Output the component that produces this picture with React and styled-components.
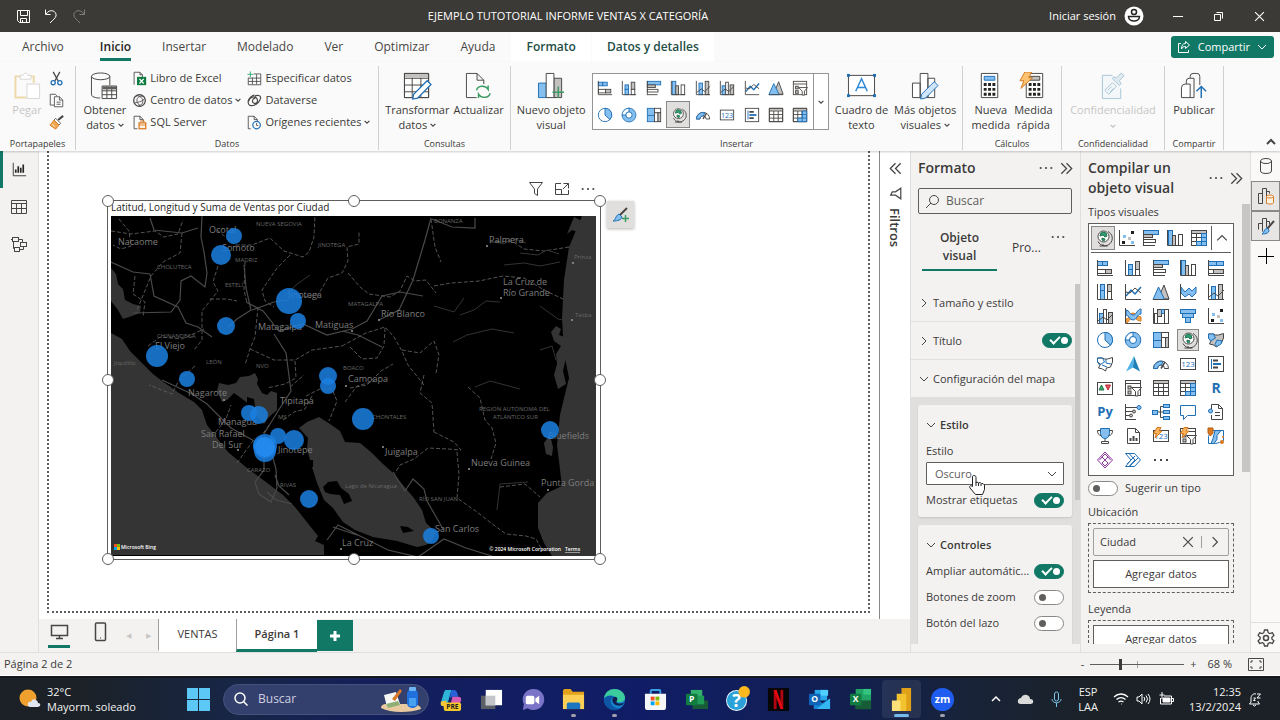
import React from 'react'
import styled, { createGlobalStyle, css } from 'styled-components'

const K = '#484644'
const B = '#84bff0'
const D = '#1f6fb5'
const G = '#c3c1bf'
const O = '#d8791f'
const green = '#117865'

/* ---------- icon drawings, 18 x 18 ---------- */

const Box = ({ x, y, w, h, f = '#fff', s = K }) => (
  <rect x={x + 0.5} y={y + 0.5} width={w} height={h} fill={f} stroke={s} />
)
const Axis = () => <path d="M1.500 1v15.500H17" />
const Bolt = () => <path d="M5 .5h4L7 4h3L3 11l1.500-4.500H1.500z" fill="#f8b25a" stroke={O} />

const tableIcon = <>
  <Box x={1} y={1} w={15} h={15} />
  <path d="M1.500 3h15" stroke={G} strokeWidth="2" />
  <path d="M1.500 4.500h15M1.500 8.500h15M1.500 12.500h15M6.500 4.500v12M11.500 4.500v12M1.500 1.500h15v15h-15z" />
</>
const slicerIcon = <>
  <Box x={1} y={1} w={15} h={15} />
  <path d="M1.500 4.500h15" />
  <rect x="4" y="7" width="3" height="3" fill={G} />
  <rect x="4" y="12" width="3" height="3" fill={G} />
  <path d="M7.500 8.500h10l-3.500 4v4.500h-2.500V12.500z" fill="#fff" />
</>
const cardIcon = <>
  <Box x={1} y={3} w={15} h={11} />
  <text x="9" y="12" textAnchor="middle" fontSize="8" fill={D} stroke="none">123</text>
</>

const glyphs = {
  stackedBar: <><Box x={1} y={2} w={5} h={4} f={B} s={D} /><Box x={6} y={2} w={5} h={4} f={B} s={D} /><Box x={1} y={10} w={8} h={4} /><Box x={9} y={10} w={6} h={4} f={G} /><Axis /></>,
  stackedCol: <><Box x={4} y={5} w={4} h={5} f={B} s={D} /><Box x={4} y={10} w={4} h={6} f={B} s={D} /><Box x={11} y={2} w={4} h={8} f={G} /><Box x={11} y={10} w={4} h={6} /><Axis /></>,
  clusteredBar: <><Box x={1} y={1} w={15} h={4} f={B} s={D} /><Box x={1} y={5} w={9} h={3} f={G} /><Box x={1} y={10} w={12} h={3} /><path d="M1.500 1v16M1.500 16.500H13" /></>,
  clusteredCol: <><Box x={2} y={1} w={4} h={15} f={B} s={D} /><Box x={6} y={6} w={3} h={10} f={G} /><Box x={12} y={5} w={4} h={11} /><Axis /></>,
  fullBar: <><Box x={1} y={2} w={8} h={4} f={B} s={D} /><Box x={9} y={2} w={7} h={4} f={B} s={D} /><Box x={1} y={10} w={5} h={4} /><Box x={6} y={10} w={10} h={4} f={G} /><Axis /></>,
  fullCol: <><Box x={4} y={1} w={4} h={6} f={B} s={D} /><Box x={4} y={7} w={4} h={9} f={B} s={D} /><Box x={11} y={1} w={4} h={7} f={G} /><Box x={11} y={8} w={4} h={8} /><Axis /></>,
  line: <><path d="M2 13l5-6 4 4 6-7" stroke={D} strokeWidth="1.500" /><path d="M2 9l4 1 5-5 6 5" /><Axis /></>,
  area: <><path d="M6 16l6-14 5 14z" fill={G} /><path d="M1 16.500L6.500 4l6 12.500z" fill={B} stroke={D} /><path d="M1 16.500h16" /></>,
  stackedArea: <><path d="M2 4l4 5 4-4 3 3 4-4v6l-4 4-3-3-4 3-4-4z" fill={B} stroke={D} /><Axis /></>,
  lineStackedCol: <><Box x={4} y={3} w={4} h={13} f={B} s={D} /><Box x={11} y={1} w={4} h={15} f={G} /><path d="M2 14l5-4 4 3 6-6" /><Axis /></>,
  lineCol: <><Box x={3} y={6} w={4} h={10} f={B} s={D} /><Box x={7} y={2} w={3} h={14} /><Box x={12} y={5} w={4} h={11} f={G} /><path d="M2 14l5-4 4 3 6-6" /><Axis /></>,
  ribbon: <><path d="M2 12c4 0 3-6 7-6s4 4 8 4v4c-5 0-4-3-8-3s-4 5-7 5z" fill="#f3a64c" stroke={O} /><path d="M2 3c4 0 3 5 7 5s4-6 8-6v5c-4 0-4 6-8 6s-4-5-7-5z" fill={B} stroke={D} /><Axis /></>,
  waterfall: <><Box x={2} y={6} w={3} h={10} /><Box x={5} y={2} w={4} h={7} f={G} /><Box x={9} y={2} w={3} h={4} f={B} s={D} /><Box x={12} y={2} w={4} h={14} /><Axis /></>,
  funnel: <><Box x={1} y={2} w={15} h={4} f={B} s={D} /><Box x={3} y={6} w={11} h={4} f={B} s={D} /><Box x={6} y={10} w={5} h={5} f={B} s={D} /></>,
  scatter: <><g stroke="none"><rect x="13" y="2" width="3" height="3" fill="#201f1e" /><rect x="4" y="12" width="3" height="3" fill="#201f1e" /><rect x="5" y="6" width="3" height="3" fill={B} /><rect x="10" y="8" width="3" height="3" fill={G} /><rect x="13" y="12" width="3" height="3" fill={B} /></g><Axis /></>,
  pie: <><circle cx="9" cy="9" r="7.500" fill="#fff" stroke={D} /><path d="M9 9V1.500A7.500 7.500 0 0 1 14.500 14.300z" fill={B} stroke={D} /></>,
  donut: <><circle cx="9" cy="9" r="5.500" stroke={B} strokeWidth="4" /><path d="M9 3.500a5.500 5.500 0 0 0-5.500 5.500" stroke="#fff" strokeWidth="3" /><circle cx="9" cy="9" r="7.800" stroke={D} /><circle cx="9" cy="9" r="3.500" stroke={D} /><path d="M9 1v4.500M1 9h4.500" stroke={D} /></>,
  treemap: <><Box x={1} y={1} w={8} h={15} f={B} s={D} /><path d="M1.500 9.500h8" stroke={D} /><Box x={9} y={1} w={7} h={5} /><Box x={9} y={6} w={4} h={10} /><Box x={13} y={6} w={3} h={10} f={G} /></>,
  globe: <><circle cx="9.500" cy="7.500" r="5.500" fill="#fff" /><path d="M9 3l3 1 1 3-2 1-2-2-3 1 1-3zM8 9l3 1-1 2-2-1z" fill="#2f9e6e" stroke="#21724f" /><path d="M14 2.500A7.500 7.500 0 1 1 4 12.500M9 15v2M5.500 17h8" /></>,
  filledMap: <><path d="M1.500 3h5l2 1h3l5-1.500V7l-2 5-4 1-1 3-3-2-4-1 2-4-3-2z" fill={G} /><path d="M1.500 3h5l2 4-5 3-2-3zM10 9l5 1-1 3-4 2.500-2-2z" fill={B} stroke={D} /></>,
  shapeMap: <><path d="M1.500 3h5l2 1h3l5-1.500V7l-2 5-4 1-1 3-3-2-4-1 2-4-3-2z" fill="#fff" /><path d="M1.500 3h5l2 4-5 3-2-3zM10 4v4l5 1M6 10l5 2" stroke={D} /></>,
  azure: <><path d="M10 1L2 16.500l7-4z" fill="#4fb3e8" stroke="none" /><path d="M10 1l6 15.500-7-4z" fill="#1d7fb8" stroke="none" /></>,
  gauge: <><path d="M1.500 13.500a7.500 7.500 0 0 1 15 0h-4a3.500 3.500 0 0 0-7 0z" fill="#fff" /><path d="M1.500 13.500a7.500 7.500 0 0 1 9.500-7L9.500 10a3.500 3.500 0 0 0-4 3.500z" fill={B} stroke={D} /><path d="M9 13.500L13 7" strokeWidth="1.500" /></>,
  card: cardIcon,
  multiRow: <><Box x={1} y={1} w={15} h={15} /><path d="M4.500 4v10" stroke={D} /><path d="M6 5.500h5M6 12.500h5" strokeWidth="2" /><path d="M6 9h8" stroke={D} strokeWidth="2" /></>,
  kpi: <><Box x={1} y={3} w={15} h={12} /><path d="M3 11l2.500-5L8 11z" fill="#3bab66" stroke="#21724f" /><path d="M9.500 6h5L12 11z" fill="#e5525b" stroke="#b52a36" /></>,
  slicer: slicerIcon,
  table: tableIcon,
  matrix: <>{tableIcon}<path d="M11.500 4.500h5v12h-10v-4h5z" fill={B} stroke={D} /><path d="M11.500 8.500h5M11.500 12.500h5M11.500 4.500v12" stroke={D} /></>,
  r: <text x="9" y="14" textAnchor="middle" fontSize="14" fontWeight="700" fill={D} stroke="none">R</text>,
  py: <text x="9" y="13" textAnchor="middle" fontSize="13" fontWeight="700" fill={D} stroke="none">Py</text>,
  influencers: <><path d="M2 4.500h11M2 8.500h7M2 12.500h4M2 16.500h10" /><path d="M1.500 1v16" /><circle cx="15" cy="4.500" r="2" fill={B} stroke={D} /><circle cx="10" cy="8.500" r="1.500" fill={G} /><circle cx="7" cy="12.500" r="1.500" fill={G} /></>,
  tree: <><path d="M5 9h6M8.500 3.500v11M8.500 3.500H11M8.500 14.500H11" /><Box x={0} y={7} w={5} h={4} f={B} s={D} /><Box x={11} y={1} w={6} h={3} f={B} s={D} /><Box x={11} y={7} w={6} h={3} f={B} s={D} /><Box x={11} y={13} w={6} h={3} f={B} s={D} /></>,
  qna: <path d="M1.500 2.500h15v10h-8l-4 4v-4h-3z" fill="#fff" stroke={D} />,
  narrative: <><path d="M4.500 6V1.500h7l4 4v11h-11V12" fill="#fff" /><path d="M11.500 1.500v4h4M8 9.500h5M8 12.500h5" /><circle cx="3.500" cy="8" r="2" fill={B} stroke={D} /></>,
  trophy: <><path d="M4.500 1.500h9v5c0 3-2 5-4.500 5s-4.500-2-4.500-5z" fill={B} stroke={D} /><path d="M4.500 3.500h-3c0 3 1 5 4 5M13.500 3.500h3c0 3-1 5-4 5M9 12v3M5.500 16.500h7v-2h-7z" /></>,
  paginated: <><path d="M3.500 1.500h8l4 4v11h-12z" fill="#fff" /><path d="M11.500 1.500v4h4" /><path d="M6.500 14v-3M9.500 14v-5M12.500 14v-3" strokeWidth="2" /></>,
  newCard: <>{cardIcon}<Bolt /></>,
  newSlicer: <>{slicerIcon}<Bolt /></>,
  arcgis: <><path d="M4 3.500h12.500v10l-4 2-4 1H1.500v-7z" fill="#fff" stroke={D} /><path d="M8 3.500h6l-4 5v4l-3 4H4l2-5z" fill={B} stroke={D} /><path d="M1 1h5v5L3.500 9 1 6z" fill={O} stroke="#b85c10" /><circle cx="15" cy="15" r="2" fill={O} stroke="none" /><circle cx="16" cy="10" r="1" fill={O} stroke="none" /></>,
  powerApps: <g stroke="#8d3a9d"><path d="M9 1l7.500 8L9 17 1.500 9z" fill="#fff" /><path d="M9 3L6 6l6 6-3 3M9 3l3 3-6 6 3 3M3.500 9L6 6M14.500 9L12 6" /></g>,
  powerAutomate: <g stroke={D}><path d="M1.500 2.500h9l6 6.500-6 6.500h-9L7 9z" fill="#fff" /><path d="M5 2.500l6 6.500-6 6.500M3 13l8-8M6 15l8-8" /></g>,
  dots: <g fill={K} stroke="none"><rect x="2" y="8" width="2" height="2" /><rect x="8" y="8" width="2" height="2" /><rect x="14" y="8" width="2" height="2" /></g>,

  excelFile: <><path d="M2.500 16.500v-15h7l3 3v3" /><path d="M9.500 1.500v3h3" /><rect x="6" y="7" width="11" height="10" fill="#107c41" stroke="none" /><path d="M9 9.500l5 5.500M14 9.500l-5 5.500" stroke="#fff" strokeWidth="1.500" /></>,
  hub: <><circle cx="9" cy="9" r="7" strokeWidth="1.500" /><path d="M3 5c4-4 10 0 10 5 0 3-2 5-5 5M15 5c-4-3-10 0-9 5 0 2 2 4 4 5M3 12c3-1 9-1 12-5" /></>,
  sqlFile: <><path d="M2.500 16.500v-15h7l4 4v3" /><path d="M9.500 1.500v4h4M2.500 16.500h4" /><rect x="8.500" y="9.500" width="8" height="7" fill="#fdf3e3" stroke={O} strokeWidth="1.500" /><path d="M8.500 12h8M10.500 9V7h4v2" stroke={O} /></>,
  enterData: <><path d="M1.500 8v8.500h15v-13H8" /><path d="M1.500 8.500h15M1.500 12.500h15M6.500 8v8M11.500 4v12" /><path d="M4 .5v7M.5 4h7" stroke="#21a366" /></>,
  dataverse: <g strokeWidth="1.400"><path d="M10 6.500a3 3 0 1 0 2.500 3.500c.5-4-2.500-6-6-5S1 9 1.500 12s3 3.500 5.500 3c5-1 8-4 9.500-9.500M16.500 5.500c-.5-3-4-3-7-2" /><path d="M2 10c1-4 3-7 7-7.500" /></g>,
  recent: <><path d="M4.500 16.500h-3v-15h7l4 4v2" /><path d="M8.500 1.500v4h4" /><circle cx="11.500" cy="12" r="4.500" fill="#fff" stroke={D} strokeWidth="1.500" /><path d="M11.500 9.500V12.500h2" /></>,
  cut: <><path d="M5 1l6 11M13 1L7 12" strokeWidth="1.500" /><circle cx="5" cy="14" r="2.500" stroke={D} strokeWidth="1.500" /><circle cx="13" cy="14" r="2.500" stroke={D} strokeWidth="1.500" /></>,
  copy: <><path d="M6 14.500H1.500v-13h6l2 2" /><path d="M6.500 4.500h6l4 4v8h-10z" fill="#fff" /><path d="M12.500 4.500v4h4M9 11h5M9 13.500h5" /></>,
  brush: <><path d="M17 1l-6 5" strokeWidth="2.500" /><path d="M8 4l6 6-2 2-6-6z" fill="#fff" /><path d="M6 6l6 6-4 5-7-5 2-2z" fill="#f0a651" stroke={O} /><path d="M4 11l3 3" stroke="#fff" /></>,
  report: <><path d="M1.500 1v15.500H17" stroke="#252423" /><path d="M4.500 13v-4M7.500 13V5M10.500 13V7M13.500 13V3" strokeWidth="2" stroke="#252423" /></>,
  model: <><Box x={2} y={2} w={6} h={4} f="#f3f2f1" /><Box x={10} y={7} w={6} h={4} f="#f3f2f1" /><Box x={4} y={12} w={5} h={4} f="#f3f2f1" /><path d="M1 4.500h1M8.500 4.500h4v3M3.500 6.500v7h1M9.500 14.500h4v-3" /></>,
  tableView: <><path d="M1.500 2.500h15v13h-15zM1.500 5.500h15M1.500 10.500h15M6.500 5.500v10M11.500 5.500v10" /></>,
  cylinder: <><ellipse cx="9" cy="4" rx="5.500" ry="2.500" /><path d="M3.500 4v10c0 3.300 11 3.300 11 0V4" /></>,
  buildPane: <><path d="M1.500 16.500v-10h4v10zM5.500 16.500v-15h4v15M9.500 6.500v-2h3v2" /><path d="M9.500 9.500c0-2 7-2 7 0v6c0 2-7 2-7 0z" fill="#fdf3e3" stroke={O} /><path d="M9.500 9.500c0 2 7 2 7 0" stroke={O} /></>,
  formatPane: <><path d="M1.500 12.500v-6h4v8M5.500 10v-8.500h4v9M9.500 4.500h3v3" /><path d="M17 4l-7 8" strokeWidth="2" /><path d="M10 11l2 2c0 3-3 4-7 4 2-1 2-5 5-6z" fill={B} stroke={D} /></>,
}

const Svg = styled.svg`
  display: block;
  flex: none;
  fill: none;
  stroke: ${p => p.$ink || K};
  font-family: 'Open Sans', sans-serif;
`
const Glyph = ({ name, size = 18 }) => (
  <Svg width={size} height={size} viewBox="0 0 18 18" overflow="visible" aria-hidden="true">{glyphs[name]}</Svg>
)

const arrows = {
  down: 'M1 3l4 4 4-4',
  up: 'M1 7l4-4 4 4',
  right: 'M3 1l4 4-4 4',
  cross: 'M1 1l8 8M9 1L1 9',
  dblRight: 'M1 1l4 4-4 4M5 1l4 4-4 4',
  dblLeft: 'M5 1L1 5l4 4M9 1L5 5l4 4',
}
const Arrow = ({ to, size = 10, color = K, weight = 1 }) => (
  <Svg width={size} height={size} viewBox="0 0 10 10" aria-hidden="true">
    <path d={arrows[to]} stroke={color} strokeWidth={weight} />
  </Svg>
)

/* large ribbon icons */
const big = {
  paste: <g stroke="#d9d6d2"><path d="M8 4.500H2.500v22H14" stroke="#eed9a8" strokeWidth="2" /><path d="M18 4.500h3.500v7" stroke="#eed9a8" strokeWidth="2" /><path d="M7.500 7.500v-4h3c0-3 5-3 5 0h3v4z" fill="#fff" /><path d="M14.500 12.500h13v15h-13z" fill="#fff" /></g>,
  getData: <><ellipse cx="11" cy="4.500" rx="9.500" ry="3.500" /><path d="M1.500 4.500v19c0 2 4 3.500 9 3.500M20.500 4.500v9" /><path d="M12.500 14.500h15v13h-15zM12.500 19.500h15M12.500 23.500h15M17.500 15v12M22.500 15v12" fill="#fff" /><path d="M13 16.500h14" stroke="#605e5c" strokeWidth="3" /></>,
  transform: <><path d="M1.500 1.500h25v25h-25z" fill="#fff" /><path d="M2 3.500h24" stroke={G} strokeWidth="4" /><path d="M1.500 6.500h25M1.500 13.500h25M1.500 20.500h25M9.500 6v21M18.500 6v21M1.500 1.500h25v25h-25z" /><path d="M25 9l4 4-14 14-5 1 1-5z" fill="#fff" stroke={D} strokeWidth="1.300" /></>,
  refresh: <><path d="M13 26.500H2.500v-25h11l7 7v4" /><path d="M13.500 1.500v7h7" /><path d="M13 19c1-5 9-6 12-1v-4M27 22c-1 5-9 6-12 1v4" stroke="#3a9b64" strokeWidth="1.500" /></>,
  newVisual: <><path d="M1.500 11.500h8v15h-8z" fill={B} stroke={D} /><path d="M17.500 6.500h8v20h-8z" fill={G} /><path d="M9.500 1.500h8v25h-8z" fill="#fff" /><path d="M22 15v12M16 21h12" stroke="#3a9b64" strokeWidth="1.500" /></>,
  textBox: <><path d="M1.500 3.500h27v21h-27z" fill="#fff" /><path d="M9 20l6-13 6 13M11 16h8" stroke="#2b88d8" strokeWidth="1.500" /><g fill={D} stroke="none"><rect x="0" y="2" width="3" height="3" /><rect x="27" y="2" width="3" height="3" /><rect x="0" y="23" width="3" height="3" /><rect x="27" y="23" width="3" height="3" /></g></>,
  moreVisuals: <><path d="M1.500 11.500h8v15h-8zM9.500 1.500h8v25h-8zM17.500 6.500h7v20h-7z" fill="#fff" /><path d="M24 10l4 4-13 13-5 1 1-5z" fill="#cfe6fa" stroke={D} /></>,
  measure: <><path d="M5.500 1.500h17v25h-17z" fill="#fff" /><path d="M8.500 4.500h11v4h-11z" fill={B} stroke={D} /><path d="M8 13h12M8 18h12M8 23h12" strokeWidth="3" strokeDasharray="3 1.500" stroke="#252423" /></>,
  quickMeasure: <><path d="M7.500 1.500h17v25h-17z" fill="#fff" /><path d="M10.500 4.500h11v4h-11z" fill={G} /><path d="M10 13h12M10 18h12M10 23h12" strokeWidth="3" strokeDasharray="3 1.500" stroke="#252423" /><path d="M6 0h7l-3 6h4L2 17l3-8H1z" fill="#fbc274" stroke={O} /></>,
  sensitivity: <g stroke="#a9c6d6"><path d="M14 3.500H3.500v24h19V17" fill="#f3f7f9" /><path d="M6 19l8-8 4 4-8 8zM9 19l4-4M11 21l4-4" /><path d="M14 7l7 7 2-2-2-3 5-5-3-3-5 5-3-1z" fill="#dfeaf0" /></g>,
  publish: <><path d="M1.500 16.500q0-4 4-4h5v14h-9z" fill="#fff" /><path d="M6.500 12.500v-3q0-3 3-3h5v20h-4M10.500 6.500v-2q0-3 3-3h4q3 0 3 3v9" /><path d="M22 27V15M17 20l5-5 5 5" stroke={D} strokeWidth="1.500" /></>,
}
const BigIcon = ({ name }) => (
  <Svg width="29" height="28" viewBox="0 0 30 29" aria-hidden="true">{big[name]}</Svg>
)

/* ---------- base ---------- */

const GlobalStyle = createGlobalStyle`
  * { box-sizing: border-box; }
  body {
    margin: 0;
    background: #f3f2f1;
    color: #3b3a39;
    font-family: 'Open Sans', 'Noto Sans', sans-serif;
    font-size: 11px;
    line-height: 16px;
  }
  button, input, select {
    font: inherit;
    color: inherit;
  }
  button {
    border: 0;
    padding: 0;
    background: none;
  }
  h1, h2, h3, p { margin: 0; }
`

const Shell = styled.div`
  display: flex;
  flex-direction: column;
  height: 100vh;
  overflow: hidden;
`

/* ---------- title bar ---------- */

const TitleBar = styled.header`
  display: grid;
  grid-template-columns: 1fr auto 1fr;
  align-items: center;
  height: 32px;
  flex: none;
  background: #3b3a36;
  color: #fff;
`
const TitleTools = styled.div`
  display: flex;
  align-items: center;
  gap: 12px;
  padding-left: 16px;
`
const TitleText = styled.h1`
  font-size: 11px;
  font-weight: 400;
  padding-right: 144px;
`
const Account = styled.div`
  display: flex;
  align-items: center;
  justify-content: flex-end;
  gap: 8px;
  grid-column: 3;
`
const WindowButtons = styled.div`
  display: flex;
  margin-left: 5px;
  button {
    display: grid;
    place-items: center;
    width: 41px;
    height: 32px;
  }
`

/* ---------- ribbon ---------- */

const TabRow = styled.nav`
  display: flex;
  gap: 1px;
  height: 30px;
  flex: none;
  background: #fafafa;
  padding: 0 6px 0 7px;
`
const RibbonTab = styled.button`
  position: relative;
  padding: 0 15px;
  font-size: 12px;
  color: #484644;
  &:first-child { margin-right: 5px; }
  ${p => p.$context && css`
    background: #fff;
    color: #1e4e45;
    font-weight: 600;
  `}
  ${p => p.$active && css`
    font-weight: 600;
    color: #252423;
    &::after {
      content: '';
      position: absolute;
      left: 15px;
      right: 15px;
      bottom: 1px;
      height: 3px;
      background: ${green};
    }
  `}
`
const ShareButton = styled.button`
  display: flex;
  align-items: center;
  justify-content: center;
  gap: 7px;
  height: 22px;
  margin: 4px 0 0 auto;
  padding: 0 7px 0 6px;
  border-radius: 3px;
  background: ${green};
  color: #fff;
  font-weight: 500;
`
const Ribbon = styled.section`
  position: relative;
  z-index: 2;
  display: flex;
  height: 89px;
  flex: none;
  padding-top: 4px;
  background: #fafafa;
  box-shadow: 0 1px 2px rgba(0, 0, 0, .2);
`
const Group = styled.div`
  display: flex;
  flex-direction: column;
  flex: 0 1 ${p => p.$basis}px;
  border-right: 1px solid #d2d0ce;
  margin-bottom: 1px;
`
const GroupItems = styled.div`
  display: flex;
  justify-content: center;
  gap: ${p => p.$gap || 4}px;
  flex: 1;
`
const GroupLabel = styled.div`
  font-size: 9px;
  line-height: 12px;
  text-align: center;
`
const BigButton = styled.button`
  display: flex;
  flex-direction: column;
  align-items: center;
  align-self: flex-start;
  gap: 2px;
  min-width: 32px;
  padding-top: 6px;
  line-height: 15px;
  color: ${p => (p.disabled ? '#c8c6c4' : 'inherit')};
  white-space: nowrap;
`
const Inline = styled.span`
  display: inline-flex;
  align-items: center;
  justify-content: center;
  gap: 3px;
`
const Stack = styled.div`
  display: flex;
  flex-direction: column;
  padding-top: 1px;
`
const SmallButton = styled.button`
  display: flex;
  align-items: center;
  gap: 3px;
  height: 22px;
  white-space: nowrap;
`
const Gallery = styled.div`
  display: flex;
  width: 237px;
  height: 57px;
  margin-top: 7px;
  border: 1px solid #979593;
  background: #fff;
`
const GalleryGrid = styled.div`
  display: grid;
  grid-template-columns: repeat(9, 1fr);
  grid-auto-rows: 27px;
  flex: 1;
  border-right: 1px solid #979593;
`
const VisualButton = styled.button`
  display: grid;
  place-items: center;
  ${p => p.$on && css`
    background: #e1dfdd;
    box-shadow: inset 0 0 0 1px #8a8886;
  `}
`
const MoreButton = styled.button`
  display: grid;
  place-items: center;
  width: 14px;
`
const CollapseButton = styled.button`
  margin: auto 4px 4px auto;
`

/* ---------- workspace ---------- */

const Work = styled.main`
  display: flex;
  flex: 1;
  min-height: 0;
`
const ViewRail = styled.nav`
  display: flex;
  flex-direction: column;
  width: 39px;
  flex: none;
  border-right: 1px solid #e1dfdd;
`
const ViewButton = styled.button`
  display: grid;
  place-items: center;
  height: 37px;
  border-left: 3px solid ${p => (p.$on ? green : 'transparent')};
  padding-right: 3px;
`
const Center = styled.div`
  display: flex;
  flex-direction: column;
  flex: 1;
  min-width: 0;
`
const CanvasRow = styled.div`
  display: flex;
  flex: 1;
  min-height: 0;
  background: #fff;
`
const Canvas = styled.div`
  flex: 1;
  padding: 0 9px 6px 8px;
`
const Page = styled.div`
  position: relative;
  height: 100%;
  border: 2px dotted #605e5c;
  border-top: 0;
`
const FilterPane = styled.aside`
  display: flex;
  flex-direction: column;
  align-items: center;
  gap: 12px;
  width: 31px;
  flex: none;
  padding-top: 11px;
  border-left: 1px solid #8a8886;
  h2 {
    writing-mode: vertical-rl;
    margin-top: -4px;
    font-size: 13px;
    font-weight: 600;
  }
`
const VisualFrame = styled.article`
  position: absolute;
  left: 58px;
  top: 49px;
  width: 494px;
  height: 360px;
  padding: 0 4px 3px 3px;
  border: 1px solid #605e5c;
  h3 {
    padding-bottom: 3px;
    font-size: 10px;
    font-weight: 400;
    line-height: 12px;
    color: #252423;
  }
`
const Handle = styled.i`
  position: absolute;
  left: ${p => p.$x};
  top: ${p => p.$y};
  width: 12px;
  height: 12px;
  margin: -6px;
  border: 1px solid #605e5c;
  border-radius: 50%;
  background: #fff;
`
const VisualTools = styled.div`
  position: absolute;
  right: 4px;
  top: -20px;
  display: flex;
  gap: 10px;
`
const BrushButton = styled.button`
  position: absolute;
  left: 499px;
  top: 0;
  display: grid;
  place-items: center;
  width: 27px;
  height: 27px;
  background: #e1dfdd;
  box-shadow: 0 1px 3px rgba(0, 0, 0, .3);
`
const MapSvg = styled.svg`
  display: block;
  width: 100%;
  background: #000;
  font-family: 'Open Sans', sans-serif;
`

const PageTabs = styled.div`
  display: flex;
  align-items: stretch;
  height: 33px;
  flex: none;
`
const DeviceButton = styled.button`
  display: grid;
  place-items: center;
  width: 22px;
  margin: 0 10px 4px 9px;
  border-bottom: 3px solid ${p => (p.$on ? green : 'transparent')};
  & + & { margin-right: 7px; }
`
const PageArrow = styled.button`
  width: 20px;
  font-size: 7px;
  color: #c8c6c4;
`
const PageTab = styled.button`
  flex: 0 0 ${p => (p.$on ? 81 : 78)}px;
  background: #fff;
  border-left: 1px solid #a19f9d;
  border-bottom: 3px solid ${p => (p.$on ? green : '#fff')};
  font-weight: ${p => (p.$on ? 600 : 400)};
`
const AddPage = styled.button`
  display: grid;
  place-items: center;
  width: 36px;
  margin: 1px 0 1px 0;
  background: ${green};
`

/* ---------- side panes ---------- */

const Pane = styled.aside`
  display: flex;
  flex-direction: column;
  width: 170px;
  flex: none;
  border-left: 1px solid #e1dfdd;
  padding-bottom: 8px;
  overflow: hidden;
`
const PaneHead = styled.div`
  display: flex;
  align-items: center;
  gap: 6px;
  padding: 7px 7px 0;
  h2 {
    flex: 1;
    font-size: 14px;
    font-weight: 600;
    line-height: 20px;
  }
`
const SearchBox = styled.label`
  display: flex;
  align-items: center;
  gap: 6px;
  height: 26px;
  margin: 10px 8px 0 7px;
  padding: 0 6px;
  border: 1px solid #605e5c;
  border-radius: 2px;
  input {
    width: 100%;
    border: 0;
    outline: 0;
    padding: 0;
    background: none;
    font-size: 12px;
  }
  input::placeholder { color: #605e5c; }
`
const FormatTabs = styled.div`
  display: flex;
  align-items: center;
  margin: 15px 14px 0 11px;
  > svg { align-self: flex-start; }
`
const FormatTab = styled.button`
  padding: 0 0 4px;
  font-size: 12px;
  line-height: 18px;
  ${p => p.$on ? css`
    width: 75px;
    font-weight: 600;
    border-bottom: 2px solid ${green};
  ` : css`
    flex: 1;
    padding-left: 15px;
    text-align: left;
  `}
`
const Scroll = styled.div`
  position: relative;
  flex: 1;
  min-height: 0;
  margin-top: ${p => p.$top || 0}px;
  overflow: hidden;
`
const ScrollThumb = styled.i`
  position: absolute;
  top: 0;
  right: 0;
  width: ${p => p.$width}px;
  height: ${p => p.$height};
  background: #c8c6c4;
`
const SectionRow = styled.div`
  display: flex;
  align-items: center;
  gap: 4px;
  height: 38px;
  padding: 0 8px;
  border-bottom: 1px solid #e1dfdd;
  h3 {
    flex: 1;
    font-size: 11px;
    font-weight: 500;
    white-space: nowrap;
  }
`
const Cards = styled.div`
  display: flex;
  flex-direction: column;
  gap: 8px;
  padding: 7px 8px 0 7px;
  background: #e1dfdd;
`
const Card = styled.section`
  padding: 9px 8px 4px;
  border-radius: 3px;
  background: #f3f2f1;
  box-shadow: 0 1px 2px rgba(0, 0, 0, .12);
  &:last-child { padding-bottom: 24px; }
  h3 {
    display: flex;
    align-items: center;
    gap: 4px;
    height: 22px;
    margin-bottom: 2px;
    font-size: 11px;
    font-weight: 600;
  }
`
const SelectLabel = styled.label`
  display: block;
  padding: 5px 0 3px;
`
const SelectBox = styled.div`
  position: relative;
  display: flex;
  align-items: center;
  margin-bottom: 2px;
  select {
    appearance: none;
    width: 100%;
    height: 23px;
    padding: 0 8px;
    border: 1px solid #605e5c;
    border-radius: 1px;
    background: #fff;
    color: #605e5c;
  }
  > svg:first-of-type {
    position: absolute;
    right: 7px;
  }
`
const Pointer = styled.svg`
  position: absolute;
  left: 42px;
  top: 12px;
`
const ToggleRow = styled.label`
  display: flex;
  align-items: center;
  justify-content: space-between;
  height: 26px;
  white-space: nowrap;
`
const ToggleInput = styled.input.attrs({ type: 'checkbox' })`
  appearance: none;
  position: relative;
  flex: none;
  width: 30px;
  height: 15px;
  margin: 0;
  border: 1px solid #8a8886;
  border-radius: 8px;
  background: #fff;
  &::before {
    content: '';
    position: absolute;
    top: 3px;
    left: 4px;
    width: 7px;
    height: 7px;
    border-radius: 50%;
    background: #605e5c;
  }
  &:checked {
    border-color: ${green};
    background: ${green};
  }
  &:checked::before {
    left: 18px;
    background: #fff;
  }
  &:checked::after {
    content: '';
    position: absolute;
    left: 7px;
    top: 2px;
    width: 8px;
    height: 4px;
    border: 2px solid #fff;
    border-width: 0 0 2px 2px;
    transform: rotate(-45deg);
  }
`
const BuildBody = styled.div`
  padding: 0 16px 0 7px;
`
const TypesBox = styled.div`
  margin-top: 3px;
  border: 1px solid #605e5c;
  background: #fff;
`
const TypesTop = styled.div`
  display: grid;
  grid-template-columns: repeat(5, 24px) 1fr;
  margin: 0 2px;
  padding: 2px 0;
  border-bottom: 1px solid #605e5c;
  button:last-child { border-left: 1px solid #605e5c; }
`
const TypesGrid = styled.div`
  display: grid;
  grid-template-columns: repeat(5, 22px);
  justify-content: space-between;
  row-gap: 2px;
  padding: 4px 6px 4px 5px;
`
const TypeButton = styled(VisualButton)`
  height: ${p => (p.$tall ? 24 : 22)}px;
`
const SuggestRow = styled.label`
  display: flex;
  align-items: center;
  gap: 7px;
  height: 24px;
`
const FieldLabel = styled.p`
  margin-top: ${p => p.$top}px;
`
const DropZone = styled.div`
  display: flex;
  flex-direction: column;
  gap: 4px;
  margin-top: 3px;
  padding: 4px;
  border: 1px dashed #605e5c;
`
const FieldChip = styled.div`
  display: flex;
  align-items: center;
  height: 28px;
  padding: 0 7px 0 6px;
  border: 1px solid #a19f9d;
  border-radius: 2px;
  span { flex: 1; }
  button + button {
    margin-left: 7px;
    padding-left: 7px;
    border-left: 1px solid #a19f9d;
  }
`
const AddDataButton = styled.button`
  height: 28px;
  border: 1px solid #605e5c;
  background: #fff;
`
const PaneRail = styled.nav`
  display: flex;
  flex-direction: column;
  align-items: stretch;
  width: 30px;
  flex: none;
  border-left: 1px solid #e1dfdd;
  background: #faf9f8;
`
const RailButton = styled.button`
  display: grid;
  place-items: center;
  height: 30px;
  ${p => p.$on && css`
    border: 1px solid #8a8886;
    background: #e8e6e4;
  `}
  &:last-child {
    margin-top: auto;
    border-top: 1px solid #e1dfdd;
  }
`

/* ---------- status bar ---------- */

const StatusBar = styled.footer`
  display: flex;
  align-items: center;
  height: 24px;
  flex: none;
  padding: 0 16px 0 4px;
  border-top: 1px solid #e1dfdd;
  border-bottom: 1px solid #fff;
`
const Zoom = styled.div`
  display: flex;
  align-items: center;
  gap: 6px;
  margin-left: auto;
  span { margin: 0 10px 0 5px; }
  input {
    appearance: none;
    width: 94px;
    height: 12px;
    margin: 0;
    background:
      linear-gradient(#605e5c, #605e5c) center / 100% 1px no-repeat,
      linear-gradient(#a19f9d, #a19f9d) 50% center / 1px 7px no-repeat;
  }
  input::-webkit-slider-thumb {
    appearance: none;
    width: 3px;
    height: 11px;
    background: #3b3a39;
  }
`

/* ---------- taskbar ---------- */

const Taskbar = styled.footer`
  display: flex;
  align-items: center;
  justify-content: space-between;
  height: 44px;
  flex: none;
  padding: 0 18px;
  border-top: 2px solid #15181c;
  background: linear-gradient(90deg, #1b2126 6%, #182646 18%, #131f5c 30%, #101d66 50%, #111f52 65%, #182338 76%, #1b2126 86%);
  color: #f3f2f1;
`
const Weather = styled.div`
  display: flex;
  align-items: center;
  gap: 5px;
  line-height: 15px;
`
const Apps = styled.div`
  display: flex;
  align-items: center;
  padding-left: 24px;
`
const TaskSearch = styled.label`
  display: flex;
  align-items: center;
  gap: 10px;
  width: 206px;
  height: 31px;
  margin: 0 2px 0 13px;
  padding: 0 6px 0 10px;
  border: 1px solid #46527c;
  border-radius: 16px;
  background: #333f6c;
  input {
    flex: 1;
    min-width: 0;
    border: 0;
    padding: 0;
    background: none;
    font-size: 12px;
  }
  input::placeholder { color: #d2d0e0; }
`
const AppButton = styled.button`
  position: relative;
  display: grid;
  place-items: center;
  width: 39px;
  margin-right: 2px;
  height: 38px;
  border-radius: 4px;
  ${p => p.$active && css`background: rgba(255, 255, 255, .08);`}
  ${p => (p.$open || p.$active) && css`
    &::after {
      content: '';
      position: absolute;
      bottom: 1px;
      width: ${p.$active ? 15 : 5}px;
      height: 3px;
      border-radius: 2px;
      background: ${p.$active ? '#76b9ed' : '#a19fab'};
    }
  `}
`
const Tray = styled.div`
  display: flex;
  align-items: center;
  gap: 7px;
  line-height: 15px;
`
const TrayHidden = styled.div`
  display: flex;
  align-items: center;
  gap: 16px;
`
const TrayText = styled.div`
  text-align: center;
  margin: 0 8px;
`
const Clock = styled.div`
  text-align: right;
  margin-left: 8px;
`

/* ---------- map ---------- */

const bubbles = [
  [234, 236, 8], [221, 255, 10], [289, 301, 13], [298, 321, 8], [226, 326, 9],
  [157, 356, 11], [187, 379, 8], [328, 376, 9], [328, 386, 8], [363, 419, 11],
  [249, 413, 8], [259, 415, 9], [278, 436, 8], [294, 440, 10], [265, 446, 12],
  [265, 451, 11], [262, 446, 9], [309, 499, 9], [431, 536, 8], [550, 430, 9],
]
const cities = [
  [209, 233, 'Ocotal'], [118, 245, 'Nacaome'], [222, 251, 'Somoto'], [288, 298, 'Jinotega'],
  [258, 330, 'Matagalpa'], [315, 328, 'Matiguas'], [155, 349, 'El Viejo'], [348, 382, 'Camoapa'],
  [188, 396, 'Nagarote'], [280, 404, 'Tipitapa'], [218, 425, 'Managua'], [201, 437, 'San Rafael'],
  [212, 448, 'Del Sur'], [385, 455, 'Juigalpa'], [471, 466, 'Nueva Guinea'], [435, 532, 'San Carlos'],
  [489, 243, 'Palmera'], [503, 285, 'La Cruz de'], [503, 296, 'Río Grande'], [381, 317, 'Río Blanco'],
  [342, 546, 'La Cruz'], [541, 486, 'Punta Gorda'], [548, 439, 'Bluefields'], [278, 453, 'Jinotepe'],
]
const regions = [
  [256, 226, 'NUEVA SEGOVIA'], [318, 247, 'JINOTEGA'], [235, 262, 'MADRIZ'], [157, 269, 'CHOLUTECA'],
  [225, 287, 'ESTELÍ'], [348, 306, 'MATAGALPA'], [157, 338, 'CHINANDEGA'], [206, 364, 'LEÓN'],
  [343, 370, 'BOACO'], [256, 368, 'NVO'], [372, 419, 'CHONTALES'], [247, 472, 'CARAZO'],
  [280, 487, 'RIVAS'], [419, 501, 'RÍO SAN JUAN'], [479, 411, 'REGIÓN AUTÓNOMA DEL'],
  [493, 419, 'ATLÁNTICO SUR'], [278, 419, 'MS'], [434, 223, 'BONANZA'], [345, 488, 'Lago de Nicaragua'],
  [574, 259, 'Prinza'], [575, 317, 'Tasba'], [114, 365, 'Jiquilillo'],
]
const dots = [[487, 246], [501, 298], [379, 320], [383, 447], [469, 469], [346, 386], [238, 450], [573, 263], [572, 320], [341, 549], [224, 400], [548, 490], [352, 331]]

const MapDrawing = () => (
  <MapSvg viewBox="111 216 485 340" role="img" aria-label="Mapa de ventas por ciudad">
    <g fill="#343434">
      <path d="M111 268l5 6 2 10 5 5 2 11 8 4 8 2-1 7-8 3-9 3-5-9-7-9zM111 333l11 6 8 12 13 13 10 10 9 7 17 12 15 9 8 8 5 15 10 13 11 14 19 16 15 11 21 16 12 12 15 19 8 10-3 5 9 4v10H111z" />
      <path d="M219 383l9 2 8-2 4-6 9-1 6-3 3 6-1 5 5 9 5 2 4-4 6 2v17l-8 7-5 7-7-8-7-11-9-7-7-5-7 7-5 2-5-11z" />
      <path d="M299 428l8-6 12-5 11 7 10 7 5 11 15 1 11 9 12 12 9 8 10 12 12 14 8 12 4 13 10 9-4 9-6 4-9 2-20-6-24-4-18-7-12-8-10-14-9-8-7-17-5-16-5-18 1-11z" />
      <path d="M582 216h14v340h-44l-8-13-6-15v-25l9-10 15-7-5-41 3-30 6-25 3-12-5-25-2-35 2-38 5-33z" />
      <path d="M567 234l5-4 6 2 2-12-6-3zM551 332l5-6 5 3-2 6 8 3 5-2 2 8-5 8-4 10-2 9 3 13-8 5-4-14 3-11-1-10 5-8-7-5zM544 443l6-8 3 12-1 9-6-2z" />
    </g>
    <g fill="#000">
      <path d="M304 460h9v7h-8zM323 487l5-5 9-1 4 7 8 6 3 7-8 3-4-9-10-1-5-2zM400 526l8 1 6 4-11 2zM247 397l7 2 1 8-8-2z" />
    </g>
    <g fill="none" stroke="#5c5c5c" strokeWidth=".9" strokeDasharray="4 2">
      <path d="M119 219l10 12 2 15-10 3-8-4M111 231l20 3 24-3 9 6 14-3 5-14M182 233l-2 20-17 9-12 14-14 34M135 276l-2 18 12 8-2 15M218 266l-5 16 5 9-16 20M202 312l0 28-8 10" />
      <path d="M217 230l18 15 17 0 18-7 14 13 19 6 6-5 5-15 1-21M245 262l-1 28 3 13M290 255l-13 13-15 22 3 11 9 6M210 299l17 0 10 2M298 298l20-3 10-17 14-5 6-12-1-14 12-3 0-12M348 273l12 14 9 7 21 3 10-6 7-15 8 5 11-1 10 13M434 286l17-3 28-2 24-5 21 2 22 13 17 8" />
      <path d="M258 307l-3 30-5 12-5 16M250 349l24 11 21 0 17-10 30-4M295 361l1 17-11 6-18 4M342 346l24-13 19-6 9 10 8 14 6 14 16 20M306 396l14-7 12 0 5 12-8 20M385 328l-1 18-7 12-15 1-12-12M350 388l17-3 14-14 12-7M402 350l18 3 14-12 5 14-3 18M424 375l-4 18 12 10 2 29M434 432l20 10 7 8-13-1-20-1-14 11-14 6-5 8M457 452l2 22-2 24 20 14 18 14 11 8 20 2 10 3 6 11" />
      <path d="M468 387l12 11 5 22 7 8 4 15-5 16M212 437l14-18 5-14M237 463l18-25M283 420l11-8 11-3 7-13M269 425l-9 13M490 242l22-1 12 8 20 2 25-4M431 219l4 28 6 15M195 366l-16 14-7 14-23-9M148 346l12-9 22 2 22-10M345 402l12-16 18-5M500 487l25-3 15 13M290 387l14-12" />
    </g>
    <g fill="none" stroke="#4a4a4a" strokeWidth="1.200">
      <path d="M202 216l-1 21 3 15 3 21-2 14-14-11-10 5-1 19-9 12-38 1M111 262l22 10 17 2 4 22 24 11 8 16 12 4 14 10M150 218l4 12 28 3 16-5M244 265l2 23 5 22-14 9-9 8M252 310l22-8 14-2M246 302l17 9 16 20 24-7 24 11 25-6 15-8 15-25 18-4 23 4M274 334l12 19 5 38-13 20-14 23M379 320l20-10 14-30 12-40 6-22M432 219l20 8 23 1 0-10M342 331l16 4 24 12" />
      <path d="M162 380l30 14 15 10 24 24 25 14 8 10 0 18-9 12 4 12 12 8 6-14-1-19-6-22M275 475l4 11 10 9M327 540l11-15 20 10 30 15 30 7 26-18 22 9 26 8M333 527l24 8M267 492l9 8 16 4M393 472l12 19 8-12 11 10 3 12 16 28" />
    </g>
    <g fill="none" stroke="#333">
      <path d="M490 241l14 3 8-6 14 5M520 253l18 2 9-5 12 4M504 265l20-2 16 3 20-4M540 306l18 13 10 2M460 315l14-5 12-9 14 1M540 350l12-4 4 14M280 300l16-15 14-10M453 342l14-7 25-6 22 4M475 387l15-6 30 8M497 510l3-26 28-2M434 306l20 6 10-14" />
    </g>
    <g fill="#7d7d7d" fontSize="9">
      {cities.map(([x, y, t]) => <text key={t} x={x} y={y}>{t}</text>)}
    </g>
    <g fill="#686868" fontSize="6">
      {regions.map(([x, y, t]) => <text key={t} x={x} y={y}>{t}</text>)}
    </g>
    <g fill="#999">
      {dots.map(([x, y]) => <circle key={x} cx={x} cy={y} r="1" />)}
    </g>
    <g fill="#1b7fe0" fillOpacity=".86">
      {bubbles.map(([x, y, r]) => <circle key={`${x}-${y}`} cx={x} cy={y} r={r} />)}
    </g>
    <circle cx="265" cy="447" r="10" fill="#2a8ff5" fillOpacity=".7" />
    <g>
      <path d="M114 544h3v3h-3z" fill="#f25022" /><path d="M117 544h3v3h-3z" fill="#7fba00" />
      <path d="M114 547h3v3h-3z" fill="#00a4ef" /><path d="M117 547h3v3h-3z" fill="#ffb900" />
    </g>
    <g fill="#fff" fontSize="5" fontWeight="600">
      <text x="121" y="549">Microsoft Bing</text>
      <text x="561" y="551" textAnchor="end">© 2024 Microsoft Corporation</text>
      <text x="565" y="551" textDecoration="underline">Terms</text>
    </g>
  </MapSvg>
)

/* ---------- taskbar app drawings, 24 x 24 ---------- */

const appIcons = [
  { id: 'Copilot', art: <><path d="M7 2h6l-4 14q-1 3-4 3-4 0-3-4l3-10q1-3 2-3z" fill="#2fb5d8" /><path d="M13 2h3q2 0 3 3l1 4h-6q-2 0-3 3z" fill="#2a62d9" /><path d="M14 9h6q4 0 3 4l-2 5q-1 3-4 3h-6z" fill="#d65bb5" /><path d="M2 14l6-1-2 6q-5 1-4-5z" fill="#f3c63a" /><rect x="5" y="15" width="18" height="9" rx="2" fill="#f8c82c" /><text x="14" y="22" fontSize="7" fontWeight="700" textAnchor="middle" fill="#222">PRE</text></> },
  { id: 'Vista de tareas', art: <><rect x="1" y="8" width="15" height="14" fill="#5d5f66" /><rect x="6" y="2" width="17" height="16" fill="#fff" /><rect x="6" y="8" width="10" height="10" fill="#c4c5ca" /></> },
  { id: 'Chat', art: <><path d="M12 1a11 11 0 1 1-5 20l-5 2 1-6A11 11 0 0 1 12 1z" fill="#7a74c9" /><rect x="5" y="8" width="9" height="9" rx="2" fill="#fff" /><path d="M15 11l4-3v9l-4-3z" fill="#fff" /></> },
  { id: 'Explorador', open: true, art: <><path d="M1 3q0-2 2-2h6l2 3h12v18H1z" fill="#e3a21a" /><path d="M1 7h22v15H1z" fill="#fcd055" /><path d="M5 22v-5q0-2 2-2h10q2 0 2 2v5z" fill="#1a76c0" /></> },
  { id: 'Edge', open: true, art: <><circle cx="12" cy="12" r="11" fill="#1683cf" /><path d="M1 11C2 4 7 1 12 1c7 0 11 5 11 9 0 5-6 6-9 4 2-2 0-6-4-6-4-1-8 1-9 3z" fill="#3ccb9c" /><path d="M1 12c1-4 7-5 10-3-4 2-4 8 1 11 2 1 5 2 7 0-3 4-9 4-13 1-3-2-5-6-5-9z" fill="#0d56a6" /><path d="M10 11c1-2 4-2 5 0 0 2-1 3-1 4 2 2 6 1 8 0-1 3-5 4-8 3s-5-4-4-7z" fill="#11204f" /></> },
  { id: 'Store', art: <><path d="M7 6V3q0-1 1-1h8q1 0 1 1v3" fill="none" stroke="#3aa0e6" strokeWidth="2" /><path d="M1 6h22v14q0 3-3 3H4q-3 0-3-3z" fill="#f5f6f8" /><path d="M7 9h4v4H7z" fill="#f25022" /><path d="M12 9h4v4h-4z" fill="#7fba00" /><path d="M7 14h4v4H7z" fill="#00a4ef" /><path d="M12 14h4v4h-4z" fill="#ffb900" /></> },
  { id: 'Project', art: <><path d="M6 2h12v14H6z" fill="#33b06b" /><path d="M12 13h12v9H8v-4z" fill="#185c37" /><path d="M12 8h8v9h-8z" fill="#219c57" /><rect x="1" y="6" width="12" height="12" rx="1" fill="#107c41" /><text x="7" y="15" fontSize="9" fontWeight="700" textAnchor="middle" fill="#fff">P</text></> },
  { id: 'Ayuda', art: <><circle cx="11" cy="13" r="11" fill="#e8f5fb" /><circle cx="11" cy="13" r="10" fill="#2aa1d8" /><text x="11" y="20" fontSize="19" fontWeight="700" textAnchor="middle" fill="#fff">?</text><circle cx="19" cy="4" r="6" fill="#fcb81c" /></> },
  { id: 'Netflix', art: <><rect x="1" y="0" width="22" height="24" fill="#060606" /><path d="M7 2h3v20H7z" fill="#b1060f" /><path d="M14 2h3v20h-3z" fill="#b1060f" /><path d="M7 2h3l7 20h-3z" fill="#e50914" /></> },
  { id: 'Outlook', art: <><path d="M7 2h13v11H7z" fill="#28a8ea" /><path d="M13 2h8v6h-8z" fill="#50d0ff" /><path d="M6 11l9 5 8-5v11H6z" fill="#1a86d8" /><path d="M23 11v11H9z" fill="#35b8f1" /><rect x="1" y="6" width="12" height="12" rx="1" fill="#0f64b8" /><text x="7" y="15" fontSize="9" fontWeight="700" textAnchor="middle" fill="#fff">O</text></> },
  { id: 'Excel', art: <><path d="M7 1h16v21H7z" fill="#21a366" /><path d="M15 1h8v6h-8z" fill="#33c481" /><path d="M7 13h16v9H7z" fill="#185c37" /><rect x="1" y="6" width="12" height="12" rx="1" fill="#107c41" /><text x="7" y="15" fontSize="9" fontWeight="700" textAnchor="middle" fill="#fff">X</text></> },
  { id: 'Power BI', active: true, art: <><path d="M12 0h10v24H12z" fill="#e0a018" /><path d="M7 6h9q1 0 1 1v17H7z" fill="#f2c32e" /><path d="M2 13h8q1 0 1 1v10H2z" fill="#fbe07a" /></> },
  { id: 'Zoom', open: true, art: <><circle cx="12" cy="12" r="12" fill="#1f5df0" /><text x="12" y="16" fontSize="11" fontWeight="700" textAnchor="middle" fill="#fff">zm</text></> },
]

/* ---------- screen ---------- */

const galleryTypes = [
  'stackedBar', 'stackedCol', 'clusteredBar', 'clusteredCol', 'lineStackedCol', 'lineCol', 'line', 'area', 'slicer',
  'pie', 'donut', 'treemap', 'globe', 'gauge', 'card', 'multiRow', 'table', 'matrix',
]
const paneTypes = [
  'stackedBar', 'stackedCol', 'clusteredBar', 'clusteredCol', 'fullBar',
  'fullCol', 'line', 'area', 'stackedArea', 'lineStackedCol',
  'lineCol', 'ribbon', 'waterfall', 'funnel', 'scatter',
  'pie', 'donut', 'treemap', 'globe', 'filledMap',
  'shapeMap', 'azure', 'gauge', 'card', 'multiRow',
  'kpi', 'slicer', 'table', 'matrix', 'r',
  'py', 'influencers', 'tree', 'qna', 'narrative',
  'trophy', 'paginated', 'newCard', 'newSlicer', 'arcgis',
  'powerApps', 'powerAutomate', 'dots',
]

const RibbonAction = ({ icon, lines, menu, disabled }) => (
  <BigButton disabled={disabled}>
    <BigIcon name={icon} />
    <span>
      {lines.map((l, i) => (
        <React.Fragment key={i}>
          {i > 0 && <br />}
          <Inline>
            {l}
            {menu && i === lines.length - 1 && <Arrow to="down" size={6} weight={2} color={disabled ? '#c3c1bf' : K} />}
          </Inline>
        </React.Fragment>
      ))}
    </span>
  </BigButton>
)

const RibbonLine = ({ icon, text, menu }) => (
  <SmallButton aria-label={text || icon}>
    <Glyph name={icon} size={15} />
    {text}
    {menu && <Arrow to="down" size={6} weight={2} />}
  </SmallButton>
)

const FilterIcon = ({ size = 16 }) => (
  <Svg width={size} height={size} viewBox="0 0 16 16"><path d="M1.500 1.500h13L9.500 8v6.500l-3-2V8z" /></Svg>
)

function Header() {
  return (
    <>
      <TitleBar>
        <TitleTools>
          <button aria-label="Guardar"><Svg $ink="#fff" width="15" height="15" viewBox="0 0 15 15"><path d="M1.500 1.500h12v12h-10l-2-2zM4.500 1.500v5h7v-5M4.500 13.500v-4h6v4M6.500 11v2" /></Svg></button>
          <button aria-label="Deshacer"><Svg $ink="#fff" width="16" height="16" viewBox="0 0 16 16"><path d="M2.500 1.500v5h5M3 6c4-6 11-3 10 2-.5 2-3 4-6 7" /></Svg></button>
          <button aria-label="Rehacer"><Svg $ink="#fff" width="16" height="16" viewBox="0 0 16 16" opacity=".35"><path d="M13.500 1.500v5h-5M13 6C9 0 2 3 3 8c.5 2 3 4 6 7" /></Svg></button>
        </TitleTools>
        <TitleText>EJEMPLO TUTOTORIAL INFORME VENTAS X CATEGORÍA</TitleText>
        <Account>
          Iniciar sesión
          <Svg $ink="#252423" width="20" height="20" viewBox="0 0 20 20"><circle cx="10" cy="10" r="9.500" fill="#fff" stroke="none" /><circle cx="10" cy="6" r="2.500" strokeWidth="1.500" /><path d="M4.500 10.500h11c0 6-11 6-11 0z" strokeWidth="1.500" /></Svg>
          <WindowButtons>
            <button aria-label="Minimizar"><Svg $ink="#fff" width="10" height="10" viewBox="0 0 10 10"><path d="M0 5.500h10" /></Svg></button>
            <button aria-label="Restaurar"><Svg $ink="#fff" width="11" height="11" viewBox="0 0 11 11"><path d="M1.500 3.500h6v6h-6zM3.500 1.500h6v6" /></Svg></button>
            <button aria-label="Cerrar"><Arrow to="cross" size={11} color="#fff" /></button>
          </WindowButtons>
        </Account>
      </TitleBar>
      <TabRow>
        <RibbonTab>Archivo</RibbonTab>
        <RibbonTab $active>Inicio</RibbonTab>
        <RibbonTab>Insertar</RibbonTab>
        <RibbonTab>Modelado</RibbonTab>
        <RibbonTab>Ver</RibbonTab>
        <RibbonTab>Optimizar</RibbonTab>
        <RibbonTab>Ayuda</RibbonTab>
        <RibbonTab $context>Formato</RibbonTab>
        <RibbonTab $context>Datos y detalles</RibbonTab>
        <ShareButton>
          <Svg $ink="#fff" width="14" height="14" viewBox="0 0 14 14"><path d="M4 3.500H1.500v9h10V10M8.500 1.500l4 3.500-4 3.500v-2c-2 0-3 .5-4 2.500 0-3 1-5.500 4-5.500z" /></Svg>
          Compartir
          <Arrow to="down" color="#fff" />
        </ShareButton>
      </TabRow>
      <Ribbon>
        <Group $basis={76}>
          <GroupItems $gap={6}>
            <RibbonAction icon="paste" lines={['Pegar']} disabled />
            <Stack>
              <RibbonLine icon="cut" />
              <RibbonLine icon="copy" />
              <RibbonLine icon="brush" />
            </Stack>
          </GroupItems>
          <GroupLabel>Portapapeles</GroupLabel>
        </Group>
        <Group $basis={303}>
          <GroupItems $gap={6}>
            <RibbonAction icon="getData" lines={['Obtener', 'datos']} menu />
            <Stack>
              <RibbonLine icon="excelFile" text="Libro de Excel" />
              <RibbonLine icon="hub" text="Centro de datos" menu />
              <RibbonLine icon="sqlFile" text="SQL Server" />
            </Stack>
            <Stack>
              <RibbonLine icon="enterData" text="Especificar datos" />
              <RibbonLine icon="dataverse" text="Dataverse" />
              <RibbonLine icon="recent" text="Orígenes recientes" menu />
            </Stack>
          </GroupItems>
          <GroupLabel>Datos</GroupLabel>
        </Group>
        <Group $basis={132}>
          <GroupItems>
            <RibbonAction icon="transform" lines={['Transformar', 'datos']} menu />
            <RibbonAction icon="refresh" lines={['Actualizar']} />
          </GroupItems>
          <GroupLabel>Consultas</GroupLabel>
        </Group>
        <Group $basis={452}>
          <GroupItems $gap={6}>
            <RibbonAction icon="newVisual" lines={['Nuevo objeto', 'visual']} />
            <Gallery>
              <GalleryGrid>
                {galleryTypes.map(t => (
                  <VisualButton key={t} $on={t === 'globe'} aria-label={t}><Glyph name={t} size={16} /></VisualButton>
                ))}
              </GalleryGrid>
              <MoreButton aria-label="Más"><Arrow to="down" size={6} weight={2} /></MoreButton>
            </Gallery>
            <RibbonAction icon="textBox" lines={['Cuadro de', 'texto']} />
            <RibbonAction icon="moreVisuals" lines={['Más objetos', 'visuales']} menu />
          </GroupItems>
          <GroupLabel>Insertar</GroupLabel>
        </Group>
        <Group $basis={99}>
          <GroupItems>
            <RibbonAction icon="measure" lines={['Nueva', 'medida']} />
            <RibbonAction icon="quickMeasure" lines={['Medida', 'rápida']} />
          </GroupItems>
          <GroupLabel>Cálculos</GroupLabel>
        </Group>
        <Group $basis={103}>
          <GroupItems>
            <RibbonAction icon="sensitivity" lines={['Confidencialidad', '']} menu disabled />
          </GroupItems>
          <GroupLabel>Confidencialidad</GroupLabel>
        </Group>
        <Group $basis={59}>
          <GroupItems>
            <RibbonAction icon="publish" lines={['Publicar']} />
          </GroupItems>
          <GroupLabel>Compartir</GroupLabel>
        </Group>
        <CollapseButton aria-label="Contraer"><Arrow to="up" weight={2} /></CollapseButton>
      </Ribbon>
    </>
  )
}

function ReportCanvas() {
  return (
    <Center>
      <CanvasRow>
        <Canvas>
          <Page>
            <VisualFrame>
              <h3>Latitud, Longitud y Suma de Ventas por Ciudad</h3>
              <MapDrawing />
              {['0%', '50%', '100%'].map(x => ['0%', '50%', '100%'].map(y => (
                (x !== '50%' || y !== '50%') && <Handle key={x + y} $x={x} $y={y} />
              )))}
              <VisualTools>
                <FilterIcon />
                <Svg width="16" height="16" viewBox="0 0 16 16"><path d="M7 2.500H1.500v11h13V9M1.500 8.500h6v5M9.500 2.500h5v5M14.500 2.500L9 8" /></Svg>
                <Glyph name="dots" size={16} />
              </VisualTools>
              <BrushButton aria-label="Formato">
                <Svg width="18" height="18" viewBox="0 0 18 18"><path d="M15 2L8 9" strokeWidth="2" /><path d="M7 8l3 3c-1 3-4 4-9 4 3-1 2-5 6-7z" fill={B} stroke={D} /><path d="M13.500 9v7M10 12.500h7" stroke="#3a9b64" strokeWidth="1.500" /></Svg>
              </BrushButton>
            </VisualFrame>
          </Page>
        </Canvas>
        <FilterPane>
          <Arrow to="dblLeft" size={13} />
          <Svg width="13" height="13" viewBox="0 0 16 16"><path d="M14.500 1.500v13L8 10H2l2-4h4z" strokeWidth="1.500" /></Svg>
          <h2>Filtros</h2>
        </FilterPane>
      </CanvasRow>
      <PageTabs>
        <DeviceButton $on aria-label="Escritorio"><Svg width="19" height="16" viewBox="0 0 19 16"><path d="M1.500 1.500h16v10h-16zM9.500 12v3M6 14.500h7" strokeWidth="1.500" /></Svg></DeviceButton>
        <DeviceButton aria-label="Móvil"><Svg width="13" height="20" viewBox="0 0 13 20"><rect x="1.500" y="1" width="10" height="17.500" rx="1" strokeWidth="1.500" /><path d="M6 16h1" /></Svg></DeviceButton>
        <PageArrow aria-label="Anterior">◀</PageArrow>
        <PageArrow aria-label="Siguiente">▶</PageArrow>
        <PageTab>VENTAS</PageTab>
        <PageTab $on>Página 1</PageTab>
        <AddPage aria-label="Nueva página"><Svg $ink="#fff" width="10" height="10" viewBox="0 0 10 10"><path d="M5 0v10M0 5h10" strokeWidth="3" /></Svg></AddPage>
      </PageTabs>
    </Center>
  )
}

function FormatPane() {
  return (
    <Pane>
      <PaneHead>
        <h2>Formato</h2>
        <Glyph name="dots" size={16} />
        <Arrow to="dblRight" size={13} />
      </PaneHead>
      <SearchBox>
        <Svg width="15" height="15" viewBox="0 0 15 15"><circle cx="9" cy="6" r="4.500" /><path d="M6 9l-5 5" /></Svg>
        <input type="text" placeholder="Buscar" aria-label="Buscar" />
      </SearchBox>
      <FormatTabs>
        <FormatTab $on>Objeto<br />visual</FormatTab>
        <FormatTab>Pro...</FormatTab>
        <Glyph name="dots" size={16} />
      </FormatTabs>
      <Scroll $top={13}>
        <SectionRow><Arrow to="right" /><h3>Tamaño y estilo</h3></SectionRow>
        <SectionRow><Arrow to="right" /><h3>Título</h3><ToggleInput defaultChecked aria-label="Título" /></SectionRow>
        <SectionRow><Arrow to="down" /><h3>Configuración del mapa</h3></SectionRow>
        <Cards>
          <Card>
            <h3><Arrow to="down" />Estilo</h3>
            <SelectLabel htmlFor="map-style">Estilo</SelectLabel>
            <SelectBox>
              <select id="map-style" defaultValue="Oscuro"><option>Oscuro</option></select>
              <Arrow to="down" />
              <Pointer width="18" height="22" viewBox="0 0 18 22"><path d="M6 1.500c1.500 0 2 1 2 2v5l1-.5 1.500 1 1.500-.5 1.500 1.200 1.500-.2 1.500 1.500v4.500l-2 5H7.500L2 14c-1-2 .5-3 2.500-1.500V3c0-1 .5-1.500 1.500-1.500z" fill="#fff" stroke="#222" /><path d="M8 8v4M10.500 9v3M13 10v2" stroke="#222" /></Pointer>
            </SelectBox>
            <ToggleRow>Mostrar etiquetas<ToggleInput defaultChecked /></ToggleRow>
          </Card>
          <Card>
            <h3><Arrow to="down" />Controles</h3>
            <ToggleRow>Ampliar automátic...<ToggleInput defaultChecked /></ToggleRow>
            <ToggleRow>Botones de zoom<ToggleInput /></ToggleRow>
            <ToggleRow>Botón del lazo<ToggleInput /></ToggleRow>
          </Card>
        </Cards>
        <ScrollThumb $width={5} $height="60%" />
      </Scroll>
    </Pane>
  )
}

function BuildPane() {
  return (
    <Pane>
      <PaneHead>
        <h2>Compilar un objeto visual</h2>
        <Glyph name="dots" size={16} />
        <Arrow to="dblRight" size={13} />
      </PaneHead>
      <Scroll $top={6}>
        <BuildBody>
          <p>Tipos visuales</p>
          <TypesBox>
            <TypesTop>
              {['globe', 'scatter', 'clusteredBar', 'clusteredCol', 'matrix'].map(t => (
                <TypeButton key={t} $tall $on={t === 'globe'} aria-label={t}><Glyph name={t} /></TypeButton>
              ))}
              <TypeButton $tall aria-label="Contraer"><Arrow to="up" size={12} /></TypeButton>
            </TypesTop>
            <TypesGrid>
              {paneTypes.map(t => (
                <TypeButton key={t} $on={t === 'globe'} aria-label={t}><Glyph name={t} /></TypeButton>
              ))}
            </TypesGrid>
          </TypesBox>
          <SuggestRow><ToggleInput />Sugerir un tipo</SuggestRow>
          <FieldLabel $top={4}>Ubicación</FieldLabel>
          <DropZone>
            <FieldChip>
              <span>Ciudad</span>
              <button aria-label="Quitar"><Arrow to="cross" size={12} /></button>
              <button aria-label="Opciones"><Arrow to="right" size={12} /></button>
            </FieldChip>
            <AddDataButton>Agregar datos</AddDataButton>
          </DropZone>
          <FieldLabel $top={8}>Leyenda</FieldLabel>
          <DropZone>
            <AddDataButton>Agregar datos</AddDataButton>
          </DropZone>
        </BuildBody>
        <ScrollThumb $width={8} $height="61%" />
      </Scroll>
    </Pane>
  )
}

const App = () => (
  <>
    <GlobalStyle />
    <Shell>
      <Header />
      <Work>
        <ViewRail>
          <ViewButton $on aria-label="Informe"><Glyph name="report" size={15} /></ViewButton>
          <ViewButton aria-label="Tabla"><Glyph name="tableView" /></ViewButton>
          <ViewButton aria-label="Modelo"><Glyph name="model" /></ViewButton>
        </ViewRail>
        <ReportCanvas />
        <FormatPane />
        <BuildPane />
        <PaneRail>
          <RailButton aria-label="Datos"><Glyph name="cylinder" /></RailButton>
          <RailButton $on aria-label="Compilar"><Glyph name="buildPane" /></RailButton>
          <RailButton $on aria-label="Formato"><Glyph name="formatPane" /></RailButton>
          <RailButton aria-label="Agregar"><Svg $ink="#000" width="16" height="16" viewBox="0 0 16 16"><path d="M8.500 0v16M0 8.500h16" /></Svg></RailButton>
          <RailButton aria-label="Configuración"><Svg width="18" height="18" viewBox="0 0 18 18"><circle cx="9" cy="9" r="2.500" strokeWidth="1.500" /><path d="M7.500 1h3l.7 2.700 1.500.9 2.700-.8 1.500 2.600-2 1.900v1.600l2 1.900-1.500 2.600-2.700-.8-1.500.9-.7 2.500h-3l-.7-2.500-1.500-.9-2.700.8-1.500-2.600 2-1.900V8.300l-2-1.900 1.500-2.600 2.700.8 1.500-.9z" strokeWidth="1.300" /></Svg></RailButton>
        </PaneRail>
      </Work>
      <StatusBar>
        Página 2 de 2
        <Zoom>
          <button aria-label="Alejar">-</button>
          <input type="range" min="0" max="100" defaultValue="32" aria-label="Zoom" />
          <button aria-label="Acercar">+</button>
          <span>68 %</span>
          <Svg width="16" height="13" viewBox="0 0 16 13"><path d="M.5.5h15v12H.5zM3 5V3h2M11 3h2v2M13 8v2h-2M5 10H3V8" /></Svg>
        </Zoom>
      </StatusBar>
      <Taskbar>
        <Weather>
          <Svg $ink="none" width="24" height="24" viewBox="0 0 24 24"><circle cx="10" cy="11" r="8.500" fill="#f0a02f" /><path d="M12 20q-3-1-2-4 1-2 3-1 1-4 5-2 2 1 2 3 3 0 2 3l-2 1z" fill="#dfe6f0" /></Svg>
          <div>32°C<br />Mayorm. soleado</div>
        </Weather>
        <Apps>
          <button aria-label="Inicio"><Svg $ink="none" width="23" height="23" viewBox="0 0 23 23"><path d="M0 0h11v11H0zM12 0h11v11H12zM0 12h11v11H0zM12 12h11v11H12z" fill="#5cc8f5" /></Svg></button>
          <TaskSearch>
            <Svg $ink="#fff" width="14" height="14" viewBox="0 0 14 14"><circle cx="6" cy="6" r="5" strokeWidth="1.500" /><path d="M9.500 9.500l4 4" strokeWidth="1.500" /></Svg>
            <input type="search" placeholder="Buscar" aria-label="Buscar en Windows" />
            <Svg $ink="none" width="42" height="26" viewBox="0 0 42 26"><path d="M1 22q0-5 10-4l22 0q8 1 8 5-8 3-20 3T1 22z" fill="#e8c9a0" /><path d="M4 9l12-3 4 12-13 3z" fill="#f6f7f2" /><path d="M6 18l12-3 2 4-12 3z" fill="#8fae76" /><path d="M12 13l8-10 2 2-7 10z" fill="#d9772b" /><rect x="27" y="3" width="11" height="19" rx="5" fill="#1f6fdc" /><rect x="29" y="1" width="7" height="4" rx="1" fill="#6db4f5" /><path d="M29 12h7v8h-7z" fill="#48a0f0" /></Svg>
          </TaskSearch>
          {appIcons.map(a => (
            <AppButton key={a.id} $open={a.open} $active={a.active} aria-label={a.id}>
              <Svg $ink="none" width="23" height="23" viewBox="0 0 24 24" overflow="visible">{a.art}</Svg>
            </AppButton>
          ))}
        </Apps>
        <Tray>
          <TrayHidden>
            <Arrow to="up" weight={1.5} color="#fff" />
            <Svg $ink="none" width="17" height="12" viewBox="0 0 17 12"><path d="M4 11q-4 0-3-4 1-2 3-2 2-4 6-3 3 1 3 4 4 0 3 4l-2 1z" fill="#dadada" /></Svg>
            <Svg $ink="#7cc4e8" width="13" height="17" viewBox="0 0 13 17"><rect x="4.500" y="1" width="4" height="9" rx="2" /><path d="M2 8c0 5 9 5 9 0M6.500 12v4" /></Svg>
          </TrayHidden>
          <TrayText>ESP<br />LAA</TrayText>
          <Svg $ink="#fff" width="16" height="14" viewBox="0 0 16 14" strokeWidth="1.300"><path d="M1 5c4-4 10-4 14 0M3.500 7.500c3-2.500 6-2.500 9 0M5.500 10c2-1.500 3-1.500 5 0M8 12h.5" /></Svg>
          <Svg $ink="#fff" width="15" height="14" viewBox="0 0 15 14"><path d="M1 5h2l3-3v10L3 9H1zM8 5q1.500 2 0 4M10 3.500q3 3.500 0 7M12 2q4 5 0 10" /></Svg>
          <Svg $ink="#fff" width="16" height="14" viewBox="0 0 16 14"><path d="M2.500 6v6h11V4H6M13.500 6.500h2v3h-2" /><path d="M5 6h7v4H5z" fill="#fff" /><path d="M4 0v3M1.500 3h5M4 3v4" /></Svg>
          <Clock>12:35<br />13/2/2024</Clock>
          <Svg $ink="#fff" width="14" height="15" viewBox="0 0 14 15"><path d="M8 2C5 1 3 4 3 6v4l-1.500 2h10L10 10V9M5 13q1.500 2 3 0M9 2h3.500L9 6h3.500M5.500 6h2L5.500 8.500h2" /></Svg>
        </Tray>
      </Taskbar>
    </Shell>
  </>
)

export default App
